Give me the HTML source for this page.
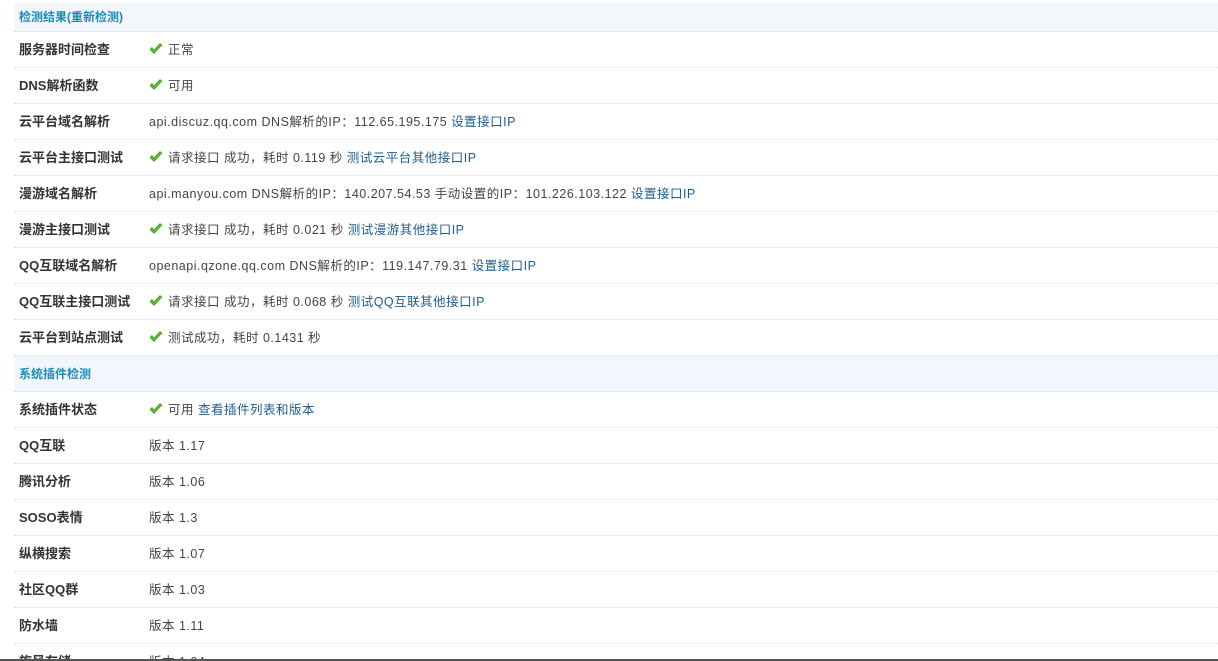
<!DOCTYPE html>
<html><head><meta charset="utf-8"><style>
html,body{margin:0;background:#fff;width:1218px;height:661px;overflow:hidden}
body{position:relative;font-family:"Liberation Sans","Noto Sans CJK SC",sans-serif;font-size:12px;color:#333}
.t{position:absolute;left:14px;right:0;top:3px}
.r{height:35px;border-bottom:1px dotted #d5dbe3;position:relative;line-height:37px}
.h{background:#f2f7fd;color:#1c8ab5;font-weight:bold;padding-left:5px;font-size:12px}
.h1{height:28px;line-height:28px}
.l{position:absolute;left:5px;top:-1px;font-weight:bold;color:#333;font-size:13px}
.v{position:absolute;left:135px;color:#444;font-size:12.5px;letter-spacing:0.5px;white-space:nowrap}
a{color:#1e5d8f;text-decoration:none}
.c{display:inline-block;width:14px;height:12px;vertical-align:-1px;margin-right:5px}
.bar{position:absolute;left:0;right:0;top:659px;height:2px;background:#555}
</style></head><body>
<svg width="0" height="0" style="position:absolute"><defs><symbol id="ck" viewBox="0 0 14 12"><path d="M1 6.5 L5 10.5 L13 2 L11 0.5 L5 7 L3 4.5 Z" fill="#5ab82e" stroke="#3f9a1c" stroke-width="0.6"/></symbol></defs></svg>
<div class="t">
<div class="r h h1">检测结果(重新检测)</div>
<div class="r"><span class="l">服务器时间检查</span><span class="v"><svg class="c"><use href="#ck"/></svg>正常</span></div>
<div class="r"><span class="l">DNS解析函数</span><span class="v"><svg class="c"><use href="#ck"/></svg>可用</span></div>
<div class="r"><span class="l">云平台域名解析</span><span class="v">api.discuz.qq.com DNS解析的IP：112.65.195.175 <a>设置接口IP</a></span></div>
<div class="r"><span class="l">云平台主接口测试</span><span class="v"><svg class="c"><use href="#ck"/></svg>请求接口 成功，耗时 0.119 秒 <a>测试云平台其他接口IP</a></span></div>
<div class="r"><span class="l">漫游域名解析</span><span class="v">api.manyou.com DNS解析的IP：140.207.54.53 手动设置的IP：101.226.103.122 <a>设置接口IP</a></span></div>
<div class="r"><span class="l">漫游主接口测试</span><span class="v"><svg class="c"><use href="#ck"/></svg>请求接口 成功，耗时 0.021 秒 <a>测试漫游其他接口IP</a></span></div>
<div class="r"><span class="l">QQ互联域名解析</span><span class="v">openapi.qzone.qq.com DNS解析的IP：119.147.79.31 <a>设置接口IP</a></span></div>
<div class="r"><span class="l">QQ互联主接口测试</span><span class="v"><svg class="c"><use href="#ck"/></svg>请求接口 成功，耗时 0.068 秒 <a>测试QQ互联其他接口IP</a></span></div>
<div class="r"><span class="l">云平台到站点测试</span><span class="v"><svg class="c"><use href="#ck"/></svg>测试成功，耗时 0.1431 秒</span></div>
<div class="r h">系统插件检测</div>
<div class="r"><span class="l">系统插件状态</span><span class="v"><svg class="c"><use href="#ck"/></svg>可用 <a>查看插件列表和版本</a></span></div>
<div class="r"><span class="l">QQ互联</span><span class="v">版本 1.17</span></div>
<div class="r"><span class="l">腾讯分析</span><span class="v">版本 1.06</span></div>
<div class="r"><span class="l">SOSO表情</span><span class="v">版本 1.3</span></div>
<div class="r"><span class="l">纵横搜索</span><span class="v">版本 1.07</span></div>
<div class="r"><span class="l">社区QQ群</span><span class="v">版本 1.03</span></div>
<div class="r"><span class="l">防水墙</span><span class="v">版本 1.11</span></div>
<div class="r"><span class="l">旋风存储</span><span class="v">版本 1.04</span></div>
</div>
<div class="bar"></div>
</body></html>
